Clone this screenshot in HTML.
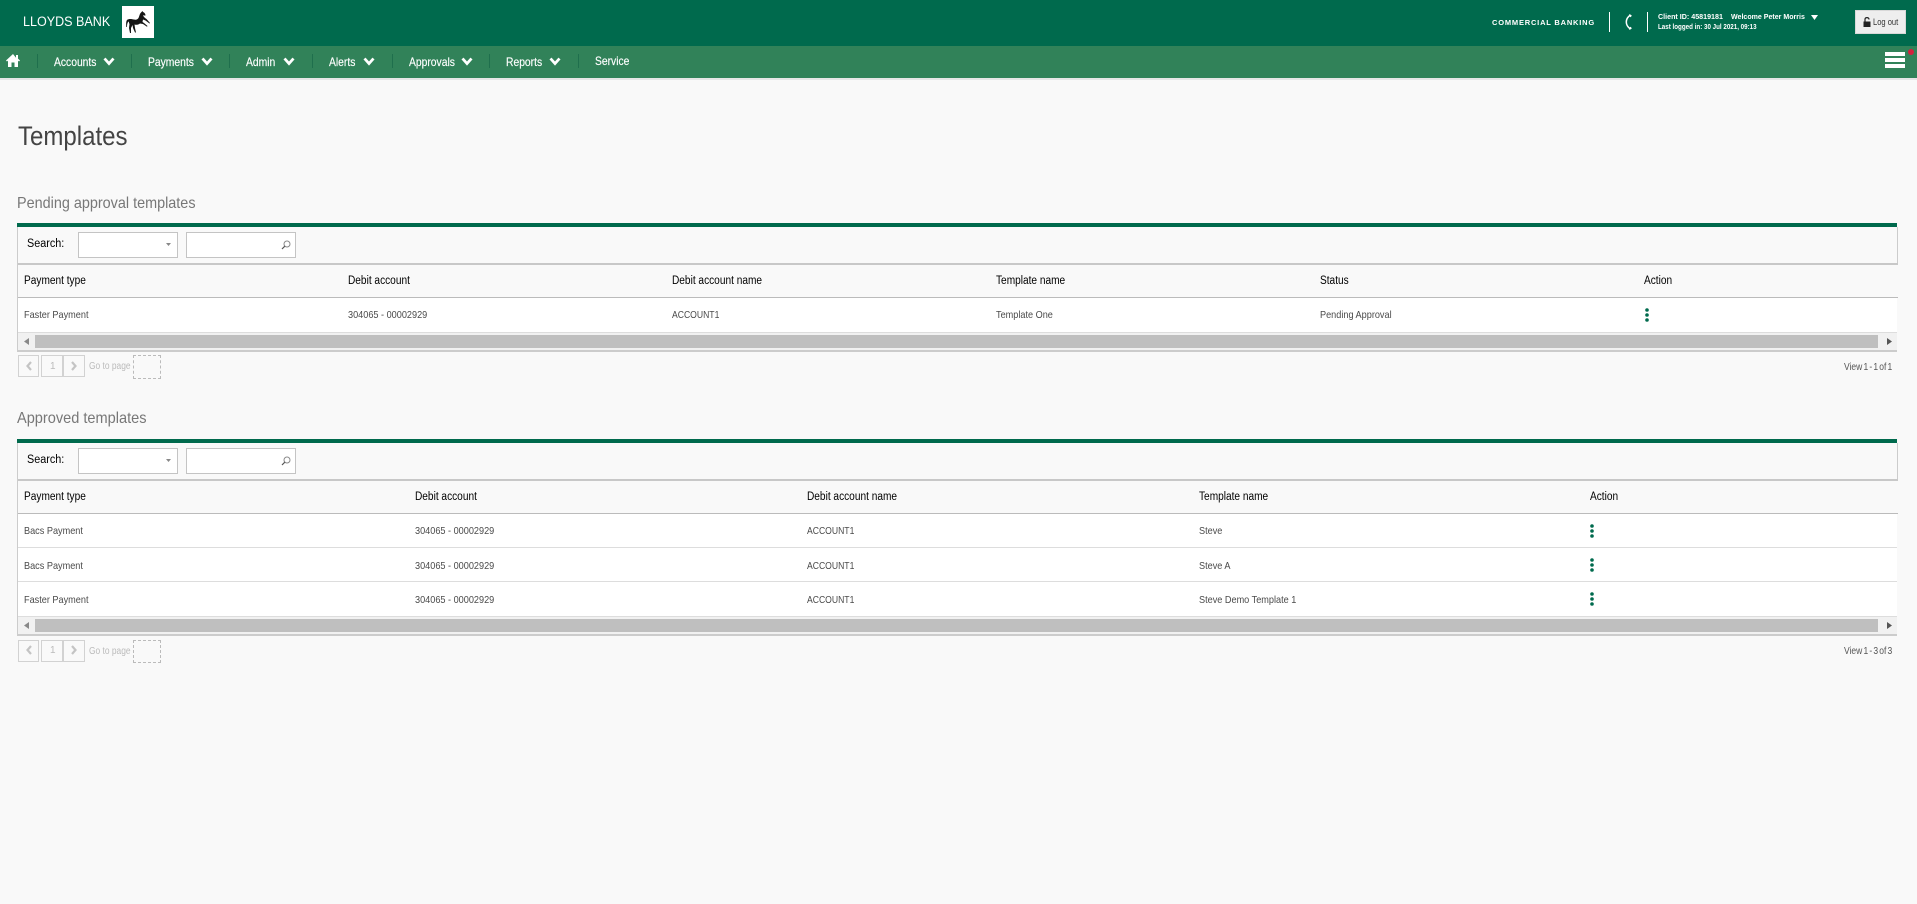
<!DOCTYPE html>
<html lang="en"><head><meta charset="utf-8"><title>Templates</title>
<style>
html,body{margin:0;padding:0;width:1917px;height:904px;overflow:hidden;background:#f9f9f9;font-family:"Liberation Sans",sans-serif;color:#333}
.a{position:absolute;white-space:nowrap;line-height:1;transform-origin:0 50%}
.b{position:absolute;box-sizing:border-box}
.nav{color:#fff;font-size:12px;transform:scaleX(.86);top:56px;-webkit-text-stroke:.15px #fff}
.th{color:#000;font-size:11.5px;transform:scaleX(.88)}
.td{color:#4a4a4a;font-size:10.5px;transform:scaleX(.87)}
.ac{transform:scaleX(.82)}
.v{font-size:10px;color:#555;transform:scaleX(.85);word-spacing:-1.4px}
svg{position:absolute;overflow:visible}
</style></head><body>

<div class="b" style="left:0;top:0;width:1917px;height:46px;background:#006a4d"></div>
<div class="b" style="left:0;top:46px;width:1917px;height:32px;background:#318259"></div>
<div class="b" style="left:0;top:78px;width:1917px;height:2px;background:#e6e6e6"></div>

<div class="a" style="left:23px;top:15px;font-size:13.5px;color:#fff;transform:scaleX(.93)">LLOYDS BANK</div>
<div class="b" style="left:122px;top:6px;width:32px;height:32px;background:#fff"></div>
<svg style="left:122px;top:6px" width="32" height="32" viewBox="0 0 32 32"><path fill="#151515" d="M5 14C7 12.500 9 13 12 13.500 14 14 15.500 13.500 16.500 12 17.500 10 17.500 8 19 6.500L20.500 5 21 6C22.500 6.500 23.500 8 23.500 9.500L22 9.500 21 9C21.500 11 23 12 24.500 13L28 17 27.500 17.500 23.500 14.500 21 13.500 20.500 16 22 17 25.500 20 25 20.800 21 18 18 17.500C16 19 14 19 12.500 18.500L13 22 14 26.500 13 26.500 11 22 10.500 19 9 22 9 27 8 27 7 22 7.500 18C7 17 6.800 16 7 15.500 5.500 16 5 18 5 21L4.300 21C4 18 4 15.500 5 14Z"/></svg>

<svg style="left:6px;top:54px" width="14" height="13" viewBox="0 0 14 13"><path fill="#fff" d="M7 0 0 6.500l1 1 1-.9V13h3.500V8.500h3V13H12V6.600l1 .9 1-1-2-1.900V1h-2v2.700z"/></svg>
<div class="b" style="left:37px;top:54px;width:1px;height:14px;background:#1f6f4d"></div>
<div class="b" style="left:131px;top:54px;width:1px;height:14px;background:#1f6f4d"></div>
<div class="b" style="left:229px;top:54px;width:1px;height:14px;background:#1f6f4d"></div>
<div class="b" style="left:312px;top:54px;width:1px;height:14px;background:#1f6f4d"></div>
<div class="b" style="left:392px;top:54px;width:1px;height:14px;background:#1f6f4d"></div>
<div class="b" style="left:489px;top:54px;width:1px;height:14px;background:#1f6f4d"></div>
<div class="b" style="left:578px;top:54px;width:1px;height:14px;background:#1f6f4d"></div>

<div class="a nav" style="left:54px">Accounts</div>
<div class="a nav" style="left:148px">Payments</div>
<div class="a nav" style="left:246px">Admin</div>
<div class="a nav" style="left:329px">Alerts</div>
<div class="a nav" style="left:409px">Approvals</div>
<div class="a nav" style="left:506px">Reports</div>
<div class="a nav" style="left:595px;top:55px">Service</div>

<svg style="left:103px;top:57px" width="12" height="9" viewBox="0 0 12 9"><path d="M1.500 1.500 6 6.500l4.500-5" fill="none" stroke="#fff" stroke-width="2.800"/></svg>
<svg style="left:201px;top:57px" width="12" height="9" viewBox="0 0 12 9"><path d="M1.500 1.500 6 6.500l4.500-5" fill="none" stroke="#fff" stroke-width="2.800"/></svg>
<svg style="left:283px;top:57px" width="12" height="9" viewBox="0 0 12 9"><path d="M1.500 1.500 6 6.500l4.500-5" fill="none" stroke="#fff" stroke-width="2.800"/></svg>
<svg style="left:363px;top:57px" width="12" height="9" viewBox="0 0 12 9"><path d="M1.500 1.500 6 6.500l4.500-5" fill="none" stroke="#fff" stroke-width="2.800"/></svg>
<svg style="left:461px;top:57px" width="12" height="9" viewBox="0 0 12 9"><path d="M1.500 1.500 6 6.500l4.500-5" fill="none" stroke="#fff" stroke-width="2.800"/></svg>
<svg style="left:549px;top:57px" width="12" height="9" viewBox="0 0 12 9"><path d="M1.500 1.500 6 6.500l4.500-5" fill="none" stroke="#fff" stroke-width="2.800"/></svg>

<div class="a" style="left:1492px;top:18.500px;font-size:7.500px;font-weight:700;letter-spacing:.8px;color:#fff">COMMERCIAL BANKING</div>
<div class="b" style="left:1609px;top:12px;width:1px;height:20px;background:#fff"></div>
<svg style="left:1624px;top:13px" width="9" height="18" viewBox="0 0 9 18"><path d="M6.500 2C3.500 4 2.300 6.500 2.300 9s1.200 5 4.200 7" fill="none" stroke="#fff" stroke-width="1.500"/><path d="M5.500 1l2.300 1.500-1 1.800-2-1.300zM5.500 17l2.300-1.500-1-1.800-2 1.300z" fill="#fff"/></svg>
<div class="b" style="left:1647px;top:12px;width:1px;height:20px;background:#fff"></div>
<div class="a" style="left:1658px;top:13px;font-size:7.500px;font-weight:700;color:#fff;transform:scaleX(.95)">Client ID: 45819181</div>
<div class="a" style="left:1731px;top:13px;font-size:7.500px;font-weight:700;color:#fff;transform:scaleX(.94)">Welcome Peter Morris</div>
<div class="a" style="left:1658px;top:23px;font-size:7.500px;font-weight:700;color:#fff;transform:scaleX(.83)">Last logged in: 30 Jul 2021, 09:13</div>
<svg style="left:1811px;top:15px" width="7" height="5" viewBox="0 0 7 5"><path d="M0 0h7L3.500 5z" fill="#fff"/></svg>
<div class="b" style="left:1855px;top:10px;width:51px;height:24px;background:#eee;border:1px solid #d8d8d8"></div>
<svg style="left:1863px;top:17px" width="8" height="10" viewBox="0 0 8 10"><path d="M2 4.500V2.500C2 1.300 2.800.6 4 .6s2 .7 2 1.900" fill="none" stroke="#222" stroke-width="1.200"/><rect x="0.500" y="4.500" width="7" height="5.500" fill="#222"/></svg>
<div class="a" style="left:1873px;top:18px;font-size:9px;color:#333;transform:scaleX(.84)">Log out</div>
<div class="b" style="left:1885px;top:52px;width:20px;height:4px;background:#fff"></div>
<div class="b" style="left:1885px;top:58px;width:20px;height:4px;background:#fff"></div>
<div class="b" style="left:1885px;top:64px;width:20px;height:4px;background:#fff"></div>
<div class="b" style="left:1908px;top:49px;width:6px;height:6px;border-radius:50%;background:#d4213d"></div>

<div class="a" style="left:18px;top:123px;font-size:27px;color:#444;transform:scaleX(.89)">Templates</div>

<!-- PENDING -->
<div class="a" style="left:17px;top:196px;font-size:16px;color:#777;transform:scaleX(.9)">Pending approval templates</div>
<div class="b" style="left:17px;top:223px;width:1880px;height:4px;background:#006a4d"></div>
<div class="b" style="left:17px;top:227px;width:1px;height:125px;background:#ccc"></div>
<div class="b" style="left:1897px;top:227px;width:1px;height:38px;background:#ccc"></div>
<div class="b" style="left:18px;top:263px;width:1880px;height:2px;background:#c8c8c8"></div>
<div class="a th" style="left:27px;top:238.500px;transform:scaleX(.94)">Search:</div>
<div class="b" style="left:78px;top:232px;width:100px;height:26px;background:#fff;border:1px solid #c4c4c4"></div>
<svg style="left:166px;top:243px" width="5" height="3" viewBox="0 0 5 3"><path d="M0 0h5L2.500 3z" fill="#888"/></svg>
<div class="b" style="left:186px;top:232px;width:110px;height:26px;background:#fff;border:1px solid #c4c4c4"></div>
<svg style="left:281px;top:240px" width="10" height="10" viewBox="0 0 10 10"><circle cx="6" cy="4" r="3" fill="none" stroke="#888"/><path d="M3.800 6.200 1 9" stroke="#555" stroke-width="1.200"/></svg>
<div class="a th" style="left:23.500px;top:276px">Payment type</div>
<div class="a th" style="left:348px;top:275.500px">Debit account</div>
<div class="a th" style="left:672px;top:275.500px">Debit account name</div>
<div class="a th" style="left:996px;top:275.500px">Template name</div>
<div class="a th" style="left:1320px;top:275.500px">Status</div>
<div class="a th" style="left:1644px;top:275.500px">Action</div>
<div class="b" style="left:18px;top:297px;width:1880px;height:1px;background:#bbb"></div>
<div class="b" style="left:18px;top:298px;width:1879px;height:35px;background:#fff;border-bottom:1px solid #ddd"></div>
<div class="a td" style="left:23.500px;top:310px">Faster Payment</div>
<div class="a td" style="left:348px;top:310px">304065 - 00002929</div>
<div class="a td ac" style="left:672px;top:310px">ACCOUNT1</div>
<div class="a td" style="left:996px;top:310px">Template One</div>
<div class="a td" style="left:1320px;top:310px">Pending Approval</div>
<svg style="left:1644px;top:307px" width="6" height="16" viewBox="0 0 6 16"><g fill="#006a4d"><circle cx="3" cy="3" r="1.800"/><circle cx="3" cy="8" r="1.800"/><circle cx="3" cy="13" r="1.800"/></g></svg>
<div class="b" style="left:18px;top:333px;width:1879px;height:18px;background:#f1f1f1"></div>
<div class="b" style="left:35px;top:335px;width:1843px;height:13px;background:#bfbfbf"></div>
<svg style="left:24px;top:338px" width="5" height="7" viewBox="0 0 5 7"><path d="M5 0v7L0 3.500z" fill="#888"/></svg>
<svg style="left:1887px;top:338px" width="5" height="7" viewBox="0 0 5 7"><path d="M0 0v7l5-3.500z" fill="#555"/></svg>
<div class="b" style="left:17px;top:350px;width:1880px;height:2px;background:#ccc"></div>

<div class="b" style="left:18px;top:355px;width:21px;height:22px;border:1px solid #d2d2d2"></div>
<div class="b" style="left:41px;top:355px;width:22px;height:22px;border:1px solid #d2d2d2"></div>
<div class="b" style="left:63px;top:355px;width:22px;height:22px;border:1px solid #d2d2d2"></div>
<svg style="left:26px;top:361px" width="6" height="10" viewBox="0 0 6 10"><path d="M5 1 1.500 5 5 9" fill="none" stroke="#c4c4c4" stroke-width="2.200"/></svg>
<svg style="left:71px;top:361px" width="6" height="10" viewBox="0 0 6 10"><path d="M1 1l3.500 4L1 9" fill="none" stroke="#c4c4c4" stroke-width="2.200"/></svg>
<div class="a" style="left:50px;top:362px;font-size:10px;color:#bbb">1</div>
<div class="a" style="left:89px;top:362px;font-size:10px;color:#bbb;transform:scaleX(.84)">Go to page</div>
<div class="b" style="left:133px;top:355px;width:28px;height:24px;border:1px dashed #bbb"></div>
<div class="a v" style="left:1844px;top:362.500px">View 1 - 1 of 1</div>

<!-- APPROVED -->
<div class="a" style="left:17px;top:411px;font-size:16px;color:#777;transform:scaleX(.91)">Approved templates</div>
<div class="b" style="left:17px;top:439px;width:1880px;height:4px;background:#006a4d"></div>
<div class="b" style="left:17px;top:443px;width:1px;height:192px;background:#ccc"></div>
<div class="b" style="left:1897px;top:443px;width:1px;height:38px;background:#ccc"></div>
<div class="b" style="left:18px;top:479px;width:1880px;height:2px;background:#c8c8c8"></div>
<div class="a th" style="left:27px;top:454.500px;transform:scaleX(.94)">Search:</div>
<div class="b" style="left:78px;top:448px;width:100px;height:26px;background:#fff;border:1px solid #c4c4c4"></div>
<svg style="left:166px;top:459px" width="5" height="3" viewBox="0 0 5 3"><path d="M0 0h5L2.500 3z" fill="#888"/></svg>
<div class="b" style="left:186px;top:448px;width:110px;height:26px;background:#fff;border:1px solid #c4c4c4"></div>
<svg style="left:281px;top:456px" width="10" height="10" viewBox="0 0 10 10"><circle cx="6" cy="4" r="3" fill="none" stroke="#888"/><path d="M3.800 6.200 1 9" stroke="#555" stroke-width="1.200"/></svg>
<div class="a th" style="left:23.500px;top:492px">Payment type</div>
<div class="a th" style="left:415px;top:491.500px">Debit account</div>
<div class="a th" style="left:807px;top:491.500px">Debit account name</div>
<div class="a th" style="left:1199px;top:491.500px">Template name</div>
<div class="a th" style="left:1590px;top:491.500px">Action</div>
<div class="b" style="left:18px;top:513px;width:1880px;height:1px;background:#bbb"></div>
<div class="b" style="left:18px;top:514px;width:1879px;height:34px;background:#fff;border-bottom:1px solid #ddd"></div>
<div class="b" style="left:18px;top:548px;width:1879px;height:34px;background:#fff;border-bottom:1px solid #ddd"></div>
<div class="b" style="left:18px;top:582px;width:1879px;height:35px;background:#fff;border-bottom:1px solid #ddd"></div>

<div class="a td" style="left:23.500px;top:526px">Bacs Payment</div>
<div class="a td" style="left:415px;top:526px">304065 - 00002929</div>
<div class="a td ac" style="left:807px;top:526px">ACCOUNT1</div>
<div class="a td" style="left:1199px;top:526px">Steve</div>
<svg style="left:1589px;top:523px" width="6" height="16" viewBox="0 0 6 16"><g fill="#006a4d"><circle cx="3" cy="3" r="1.800"/><circle cx="3" cy="8" r="1.800"/><circle cx="3" cy="13" r="1.800"/></g></svg>

<div class="a td" style="left:23.500px;top:561px">Bacs Payment</div>
<div class="a td" style="left:415px;top:561px">304065 - 00002929</div>
<div class="a td ac" style="left:807px;top:561px">ACCOUNT1</div>
<div class="a td" style="left:1199px;top:561px">Steve A</div>
<svg style="left:1589px;top:557px" width="6" height="16" viewBox="0 0 6 16"><g fill="#006a4d"><circle cx="3" cy="3" r="1.800"/><circle cx="3" cy="8" r="1.800"/><circle cx="3" cy="13" r="1.800"/></g></svg>

<div class="a td" style="left:23.500px;top:595px">Faster Payment</div>
<div class="a td" style="left:415px;top:595px">304065 - 00002929</div>
<div class="a td ac" style="left:807px;top:595px">ACCOUNT1</div>
<div class="a td" style="left:1199px;top:595px">Steve Demo Template 1</div>
<svg style="left:1589px;top:591px" width="6" height="16" viewBox="0 0 6 16"><g fill="#006a4d"><circle cx="3" cy="3" r="1.800"/><circle cx="3" cy="8" r="1.800"/><circle cx="3" cy="13" r="1.800"/></g></svg>

<div class="b" style="left:18px;top:617px;width:1879px;height:17px;background:#f1f1f1"></div>
<div class="b" style="left:35px;top:619px;width:1843px;height:13px;background:#bfbfbf"></div>
<svg style="left:24px;top:622px" width="5" height="7" viewBox="0 0 5 7"><path d="M5 0v7L0 3.500z" fill="#888"/></svg>
<svg style="left:1887px;top:622px" width="5" height="7" viewBox="0 0 5 7"><path d="M0 0v7l5-3.500z" fill="#555"/></svg>
<div class="b" style="left:17px;top:634px;width:1880px;height:1.500px;background:#ccc"></div>

<div class="b" style="left:18px;top:640px;width:21px;height:22px;border:1px solid #d2d2d2"></div>
<div class="b" style="left:41px;top:640px;width:22px;height:22px;border:1px solid #d2d2d2"></div>
<div class="b" style="left:63px;top:640px;width:22px;height:22px;border:1px solid #d2d2d2"></div>
<svg style="left:26px;top:645px" width="6" height="10" viewBox="0 0 6 10"><path d="M5 1 1.500 5 5 9" fill="none" stroke="#c4c4c4" stroke-width="2.200"/></svg>
<svg style="left:71px;top:645px" width="6" height="10" viewBox="0 0 6 10"><path d="M1 1l3.500 4L1 9" fill="none" stroke="#c4c4c4" stroke-width="2.200"/></svg>
<div class="a" style="left:50px;top:646px;font-size:10px;color:#bbb">1</div>
<div class="a" style="left:89px;top:647px;font-size:10px;color:#bbb;transform:scaleX(.84)">Go to page</div>
<div class="b" style="left:133px;top:640px;width:28px;height:23px;border:1px dashed #bbb"></div>
<div class="a v" style="left:1844px;top:646.500px">View 1 - 3 of 3</div>

</body></html>
